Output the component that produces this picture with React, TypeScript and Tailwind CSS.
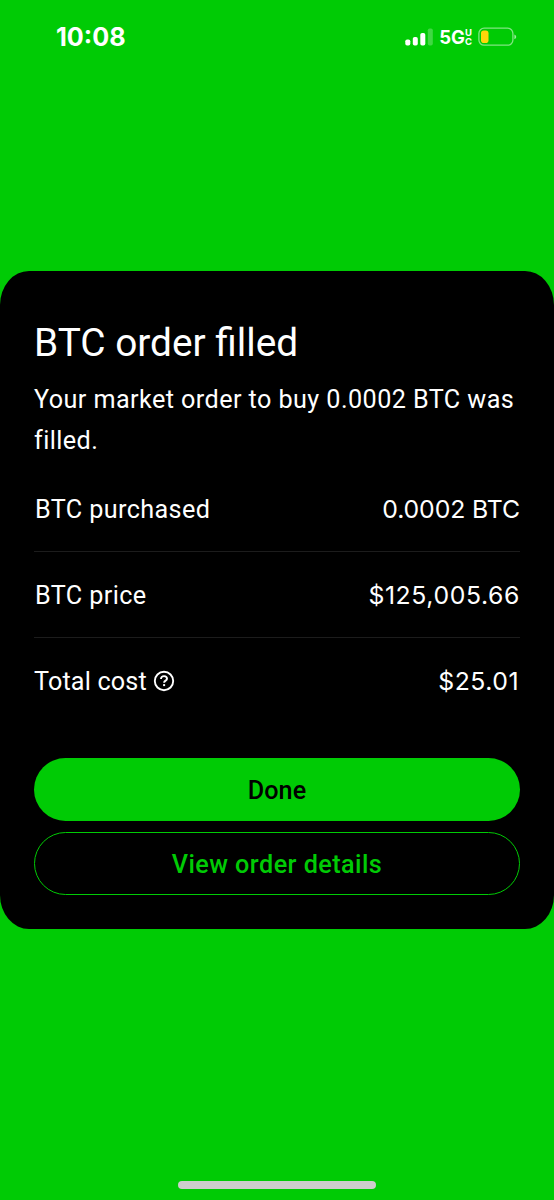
import type { ReactNode } from "react";

interface RowProps {
    label: ReactNode;
    value: string;
    valueClass: string;
}

function SignalIcon() {
    return (
        <svg width="29" height="18" viewBox="0 0 29 18" fill="#fff">
            <rect x="0.3" y="11.5" width="5" height="6" rx="1.8" />
            <rect x="7.8" y="9" width="5" height="8.5" rx="1.8" />
            <rect x="15.3" y="5" width="5" height="12.5" rx="1.8" />
            <rect x="22.8" y="0.5" width="5" height="17" rx="1.8" opacity="0.25" />
        </svg>
    );
}

function BatteryIcon() {
    return (
        <svg width="40" height="20" viewBox="0 0 40 20" fill="none">
            <rect x="0.9" y="1.2" width="34" height="17" rx="5.2" stroke="#fff" strokeOpacity="0.5" strokeWidth="1.3" />
            <rect x="3" y="3.5" width="7.5" height="12.5" rx="2.8" fill="#ffd60a" />
            <path d="M36.4 7.4c1.2.5 1.8 1.4 1.8 2.4s-.6 1.9-1.8 2.4z" fill="#fff" fillOpacity="0.6" />
        </svg>
    );
}

function HelpIcon() {
    return (
        <svg className="mb-[2px]" width="22" height="22" viewBox="0 0 22 22" fill="none" stroke="#fff">
            <circle cx="11" cy="11" r="9.2" strokeWidth="1.9" />
            <path d="M8 9c0-1.7 1.2-2.9 3-2.9s3 1.1 3 2.6c0 1.9-2.9 2-2.9 4" strokeWidth="1.9" />
            <rect x="10.1" y="14.1" width="2" height="2" fill="#fff" stroke="none" />
        </svg>
    );
}

function Row({ label, value, valueClass }: RowProps) {
    return (
        <div className="flex h-[86px] items-center justify-between border-b border-[#1c1c1c] pt-[3px] last:border-transparent">
            <span className="flex items-center gap-[6px] pl-px tracking-[0.38px]">{label}</span>
            <span className={`pb-px font-[Inter,sans-serif] text-[24.8px] leading-[35px] ${valueClass}`}>{value}</span>
        </div>
    );
}

export default function App() {
    return (
        <main className="flex h-[1200px] w-[554px] flex-col bg-[#00cb05] font-[Roboto,sans-serif] text-white">
            {/* Status bar */}
            <header className="flex h-[271px] items-start justify-between pl-[56px] pr-[36px]">
                <span className="pt-[19px] font-[Inter,sans-serif] text-[25.2px] font-bold leading-[37px]">10:08</span>
                <div className="flex items-center pt-[26px]">
                    <SignalIcon />
                    <span className="ml-[5px] font-[Inter,sans-serif] text-[18.5px] font-bold leading-[22px]">5G</span>
                    <span className="flex flex-col font-[Inter,sans-serif] text-[9.5px] font-bold leading-[9px]">
                        <span>U</span>
                        <span>C</span>
                    </span>
                    <span className="ml-[6px]">
                        <BatteryIcon />
                    </span>
                </div>
            </header>

            {/* Order confirmation */}
            <section className="h-[658px] rounded-[29px/34px] bg-black px-[34px] pt-[47px]">
                <h1 className="h-[61px] text-[38.8px] leading-[50px]">BTC order filled</h1>
                <p className="whitespace-nowrap text-[25.2px] leading-[41px] tracking-[0.42px]">
                    Your market order to buy 0.0002 BTC was
                    <br />
                    filled.
                </p>

                <div className="mt-[5px] text-[25.2px]">
                    <Row label="BTC purchased" value="0.0002 BTC" valueClass="tracking-[-0.1px]" />
                    <Row label="BTC price" value="$125,005.66" valueClass="tracking-[0.6px]" />
                    <Row
                        label={
                            <>
                                <span className="-ml-px tracking-[0.15px]">Total cost</span>
                                <HelpIcon />
                            </>
                        }
                        value="$25.01"
                        valueClass="tracking-[0.5px] pr-px"
                    />
                </div>

                <div className="mt-[34px] flex flex-col gap-[11px] text-[25.2px] font-medium tracking-[0.45px]">
                    <button className="h-[63px] rounded-full bg-[#00cb05] pt-[2px] tracking-[0.1px] text-black">Done</button>
                    <button className="h-[63px] rounded-full border border-[#00cb05] pt-[2px] text-[#00cb05]">View order details</button>
                </div>
            </section>

            <footer className="flex flex-1 items-end justify-center pb-[11px]">
                <div className="h-[8px] w-[198px] rounded-full bg-[#cdcdcd]" />
            </footer>
        </main>
    );
}
